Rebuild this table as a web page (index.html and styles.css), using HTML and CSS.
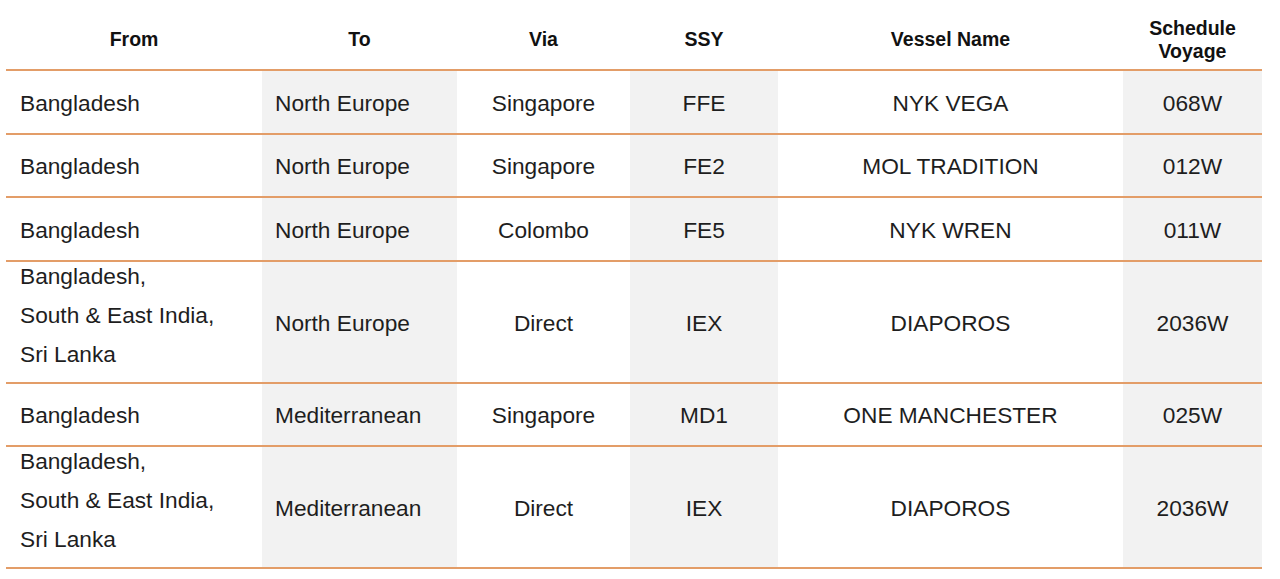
FILE: index.html
```html
<!DOCTYPE html>
<html lang="en">
<head>
<meta charset="utf-8">
<title>Sailing Schedule</title>
<link rel="stylesheet" href="styles.css">
</head>
<body>
<table class="schedule">
  <colgroup>
    <col class="c-from">
    <col class="c-to">
    <col class="c-via">
    <col class="c-ssy">
    <col class="c-vessel">
    <col class="c-voyage">
  </colgroup>
  <thead>
    <tr>
      <th>From</th>
      <th>To</th>
      <th>Via</th>
      <th>SSY</th>
      <th>Vessel Name</th>
      <th class="two-line">Schedule<br>Voyage</th>
    </tr>
  </thead>
  <tbody>
    <tr class="row">
      <td class="from">Bangladesh</td>
      <td class="to shade">North Europe</td>
      <td>Singapore</td>
      <td class="shade">FFE</td>
      <td>NYK VEGA</td>
      <td class="shade">068W</td>
    </tr>
    <tr class="row">
      <td class="from">Bangladesh</td>
      <td class="to shade">North Europe</td>
      <td>Singapore</td>
      <td class="shade">FE2</td>
      <td>MOL TRADITION</td>
      <td class="shade">012W</td>
    </tr>
    <tr class="row">
      <td class="from">Bangladesh</td>
      <td class="to shade">North Europe</td>
      <td>Colombo</td>
      <td class="shade">FE5</td>
      <td>NYK WREN</td>
      <td class="shade">011W</td>
    </tr>
    <tr class="row tall">
      <td class="from multi">
        <div class="ln">Bangladesh,</div>
        <div class="ln">South &amp; East India,</div>
        <div class="ln">Sri Lanka</div>
      </td>
      <td class="to shade">North Europe</td>
      <td>Direct</td>
      <td class="shade">IEX</td>
      <td>DIAPOROS</td>
      <td class="shade">2036W</td>
    </tr>
    <tr class="row">
      <td class="from">Bangladesh</td>
      <td class="to shade">Mediterranean</td>
      <td>Singapore</td>
      <td class="shade">MD1</td>
      <td>ONE MANCHESTER</td>
      <td class="shade">025W</td>
    </tr>
    <tr class="row tall">
      <td class="from multi">
        <div class="ln">Bangladesh,</div>
        <div class="ln">South &amp; East India,</div>
        <div class="ln">Sri Lanka</div>
      </td>
      <td class="to shade">Mediterranean</td>
      <td>Direct</td>
      <td class="shade">IEX</td>
      <td>DIAPOROS</td>
      <td class="shade">2036W</td>
    </tr>
  </tbody>
</table>
</body>
</html>
```

FILE: styles.css
```css
html, body {
  margin: 0;
  padding: 0;
  background: #ffffff;
}

body {
  font-family: "Liberation Sans", Arial, sans-serif;
  color: #1e1e1e;
}

.schedule {
  margin: 10px 0 0 6px;
  width: 1256px;
  table-layout: fixed;
  border-collapse: collapse;
  border-spacing: 0;
}

.c-from { width: 256px; }
.c-to { width: 195px; }
.c-via { width: 173px; }
.c-ssy { width: 148px; }
.c-vessel { width: 345px; }
.c-voyage { width: 139px; }

.schedule th {
  height: 59px;
  padding: 0;
  font-size: 19.5px;
  font-weight: bold;
  color: #111111;
  text-align: center;
  vertical-align: middle;
  line-height: 23px;
  border-bottom: 2px solid #e39d68;
}

.schedule td {
  height: 59.5px;
  padding: 2px 0 0 0;
  font-size: 22.7px;
  text-align: center;
  vertical-align: middle;
  line-height: 26px;
  border-bottom: 2px solid #e39d68;
}

.schedule tr.tall td {
  height: 118px;
}

.schedule td.from {
  text-align: left;
  padding-left: 14px;
}

.schedule td.to {
  text-align: left;
  padding-left: 13px;
}

.schedule td.shade {
  background: #f2f2f2;
}

.schedule td.multi {
  vertical-align: top;
  padding-top: 0;
}

.ln {
  line-height: 28px;
  margin-bottom: 11px;
}

.ln:last-child {
  margin-bottom: 0;
}
```
